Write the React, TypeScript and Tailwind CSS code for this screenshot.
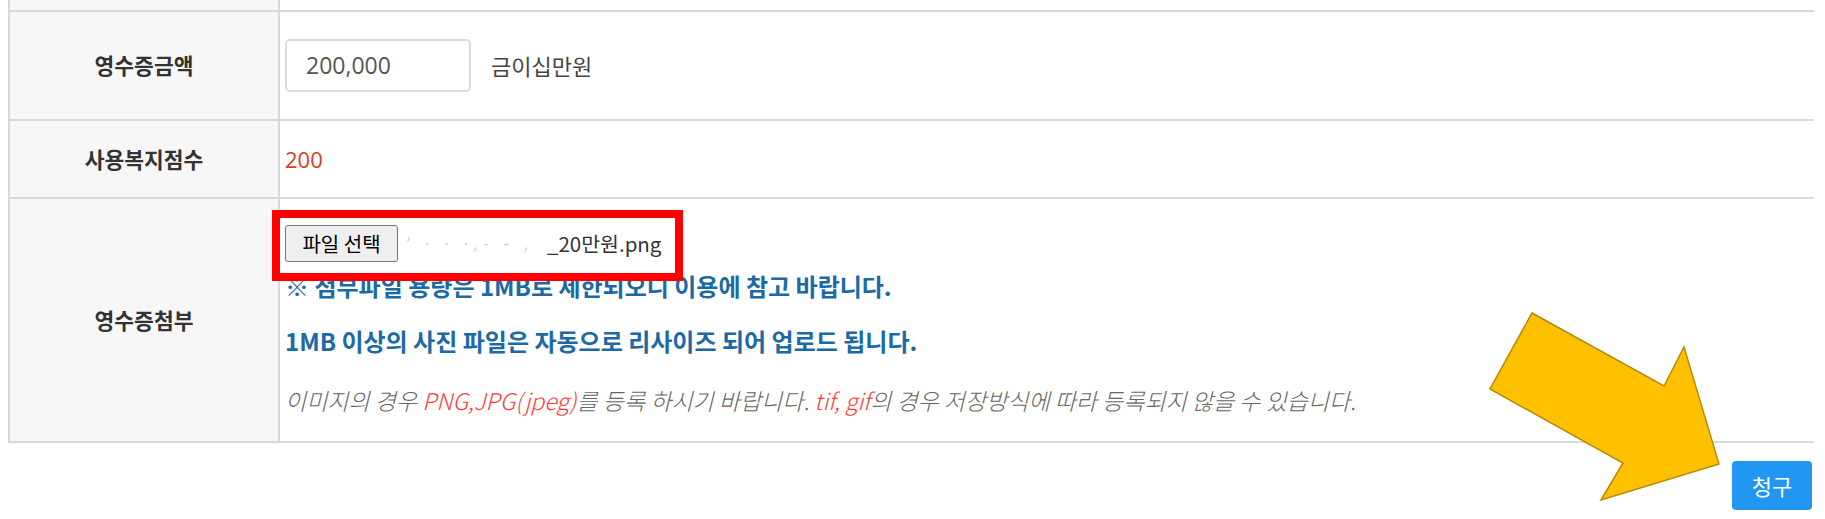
export default function App() {
  const line = "border-[#d9d9d9]";
  return (
    <div className="relative w-[1825px] h-[519px] bg-white overflow-hidden font-['Open_Sans','Noto_Sans_CJK_KR',sans-serif]">
      <div className={`ml-[8px] w-[1806px] border-l-2 ${line}`}>
        <div className="grid grid-cols-[270px_1fr] h-[10px]">
          <div className={`bg-[#f7f7f7] border-r-2 ${line}`} />
          <div />
        </div>
        <div className={`grid grid-cols-[270px_1fr] h-[109px] border-t-2 ${line}`}>
          <div className={`bg-[#f7f7f7] border-r-2 ${line} flex items-center justify-center font-bold text-[21.5px] text-[#333] font-['Noto_Sans_CJK_KR',sans-serif]`}>
            영수증금액
          </div>
          <div className="flex items-center pl-[5px]">
            <div className="w-[186px] h-[53px] border-2 border-[#dcdcdc] rounded-[5px] flex items-center pl-[19px] text-[23px] text-[#555]">
              200,000
            </div>
            <span className="ml-[20px] text-[22px] text-[#444] font-['Noto_Sans_CJK_KR',sans-serif]">금이십만원</span>
          </div>
        </div>
        <div className={`grid grid-cols-[270px_1fr] h-[78px] border-t-2 ${line}`}>
          <div className={`bg-[#f7f7f7] border-r-2 ${line} flex items-center justify-center font-bold text-[21.5px] text-[#333] font-['Noto_Sans_CJK_KR',sans-serif]`}>
            사용복지점수
          </div>
          <div className="flex items-center pl-[5px] text-[22px] text-[#dc3b26]">200</div>
        </div>
        <div className={`grid grid-cols-[270px_1fr] h-[246px] border-t-2 border-b-2 ${line}`}>
          <div className={`bg-[#f7f7f7] border-r-2 ${line} flex items-center justify-center font-bold text-[21.5px] text-[#333] font-['Noto_Sans_CJK_KR',sans-serif]`}>
            영수증첨부
          </div>
          <div className="flex flex-col pl-[5px] pt-[26px]">
            <div className="flex items-center h-[37px]">
              <button className="h-[37px] w-[113px] border border-[#767676] rounded-[3px] bg-[#efefef] text-[20px] text-black font-['Noto_Sans_CJK_KR',sans-serif] leading-none">
                파일 선택
              </button>
              <span className="ml-[9px] inline-block w-[140px] overflow-hidden whitespace-nowrap text-[18px] text-[#d4d4d4] tracking-[5px]">‘ · · ·,- - ,</span>
              <span className="text-[20.5px] text-[#333] font-['Noto_Sans_CJK_KR',sans-serif]">_20만원.png</span>
            </div>
            <div className="mt-[8px] text-[24px] font-bold text-[#1b6aa5] font-['Noto_Sans_CJK_KR',sans-serif] leading-[32px]">
              ※ 첨부파일 용량은 1MB로 제한되오니 이용에 참고 바랍니다.
            </div>
            <div className="mt-[23px] text-[24px] font-bold text-[#1b6aa5] font-['Noto_Sans_CJK_KR',sans-serif] leading-[32px]">
              1MB 이상의 사진 파일은 자동으로 리사이즈 되어 업로드 됩니다.
            </div>
            <div className="mt-[28px] text-[23px] italic font-light text-[#666] font-['Noto_Sans_CJK_KR',sans-serif] leading-[30px]">
              이미지의 경우 <span className="text-[#ff3b3b]">PNG,JPG(jpeg)</span>를 등록 하시기 바랍니다.{" "}
              <span className="text-[#ff3b3b]">tif, gif</span>의 경우 저장방식에 따라 등록되지 않을 수 있습니다.
            </div>
          </div>
        </div>
      </div>
      <div className="flex justify-end w-[1814px] mt-[18px]">
        <button className="w-[80px] h-[49px] rounded-[4px] bg-[#2196f3] text-white text-[22px] font-['Noto_Sans_CJK_KR',sans-serif] mr-[2px]">
          청구
        </button>
      </div>
      <div className="absolute left-[272px] top-[210px] w-[411px] h-[71px] border-[8px] border-[#ff0000]" />
      <svg className="absolute left-[1480px] top-[300px]" width="250" height="210" viewBox="0 0 250 210">
        <polygon
          points="52,13 184,86 204,47 239,164 121,200 143,163 10,89"
          fill="#ffc000"
          stroke="#b88a00"
          strokeWidth="1.5"
          strokeLinejoin="miter"
        />
      </svg>
    </div>
  );
}
